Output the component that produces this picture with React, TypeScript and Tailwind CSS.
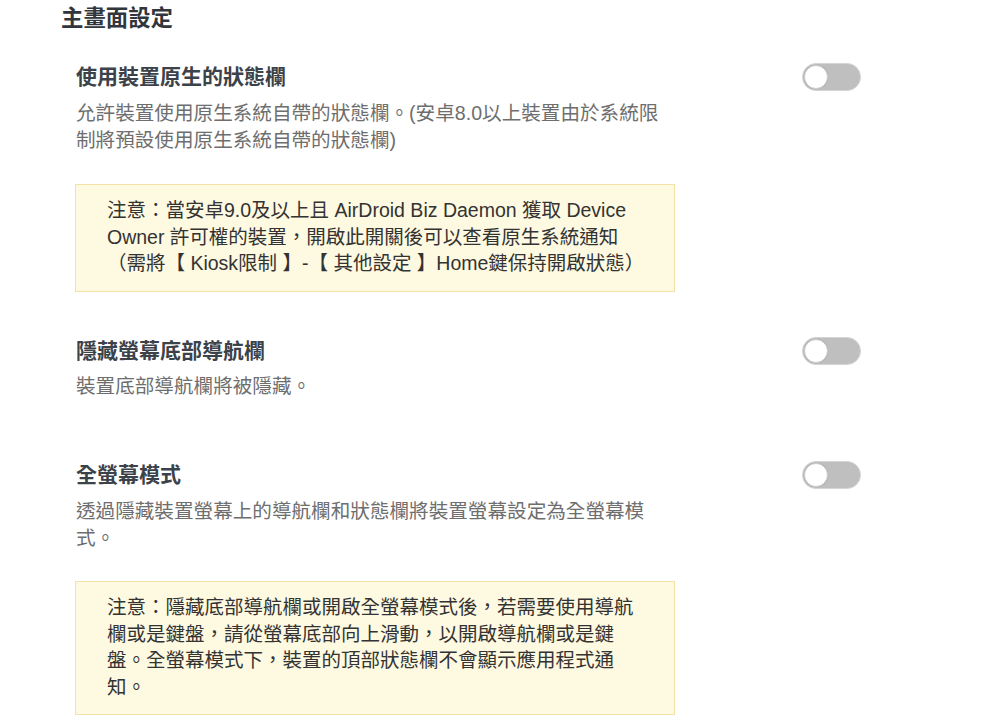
const font = { fontFamily: '"Liberation Sans", "Noto Sans CJK TC", sans-serif' };

function Toggle() {
  return (
    <div className="relative w-[59px] h-[28px] rounded-full bg-[#bfbfbf] border border-[#d4d4d4] shrink-0">
      <div className="absolute left-[1px] top-[1px] w-[24px] h-[24px] rounded-full bg-white border border-[#cccccc] shadow-[0_0_1px_rgba(0,0,0,0.2)]" />
    </div>
  );
}

function Note({ lines, className }: { lines: string[]; className?: string }) {
  return (
    <div className={`w-[600px] -ml-[1px] bg-[#fef9e1] border border-[#f3e3a6] pl-[31px] pt-[12px] pb-[14px] text-[19.5px] leading-[26.5px] text-[#333333] ${className ?? ""}`}>
      {lines.map((l, i) => (
        <div key={i} className="whitespace-nowrap">{l}</div>
      ))}
    </div>
  );
}

function Row({ title, desc }: { title: string; desc: string[] }) {
  return (
    <div className="w-[785px]">
      <div className="flex items-center justify-between">
        <h3 className="text-[21px] leading-[30px] font-bold text-[#3c4249]">{title}</h3>
        <Toggle />
      </div>
      <div className="mt-[7.5px] text-[19.6px] leading-[27px] text-[#6e6e6e]">
        {desc.map((l, i) => (
          <div key={i} className="whitespace-nowrap">{l}</div>
        ))}
      </div>
    </div>
  );
}

export default function App() {
  return (
    <div className="w-[1002px] h-[724px] bg-white overflow-hidden pl-[61px]" style={font}>
      <h2 className="text-[22.4px] leading-[38px] font-bold text-[#30363c]">主畫面設定</h2>

      <div className="pl-[15px]">
        <div className="mt-[24px]">
          <Row
            title="使用裝置原生的狀態欄"
            desc={["允許裝置使用原生系統自帶的狀態欄。(安卓8.0以上裝置由於系統限", "制將預設使用原生系統自帶的狀態欄)"]}
          />
          <Note
            className="mt-[30.5px]"
            lines={[
              "注意：當安卓9.0及以上且 AirDroid Biz Daemon 獲取 Device",
              "Owner 許可權的裝置，開啟此開關後可以查看原生系統通知",
              "（需將【 Kiosk限制 】-【 其他設定 】Home鍵保持開啟狀態）",
            ]}
          />
        </div>

        <div className="mt-[44px]">
          <Row title="隱藏螢幕底部導航欄" desc={["裝置底部導航欄將被隱藏。"]} />
        </div>

        <div className="mt-[60px]">
          <Row
            title="全螢幕模式"
            desc={["透過隱藏裝置螢幕上的導航欄和狀態欄將裝置螢幕設定為全螢幕模", "式。"]}
          />
          <Note
            className="mt-[29.5px]"
            lines={[
              "注意：隱藏底部導航欄或開啟全螢幕模式後，若需要使用導航",
              "欄或是鍵盤，請從螢幕底部向上滑動，以開啟導航欄或是鍵",
              "盤。全螢幕模式下，裝置的頂部狀態欄不會顯示應用程式通",
              "知。",
            ]}
          />
        </div>
      </div>
    </div>
  );
}
